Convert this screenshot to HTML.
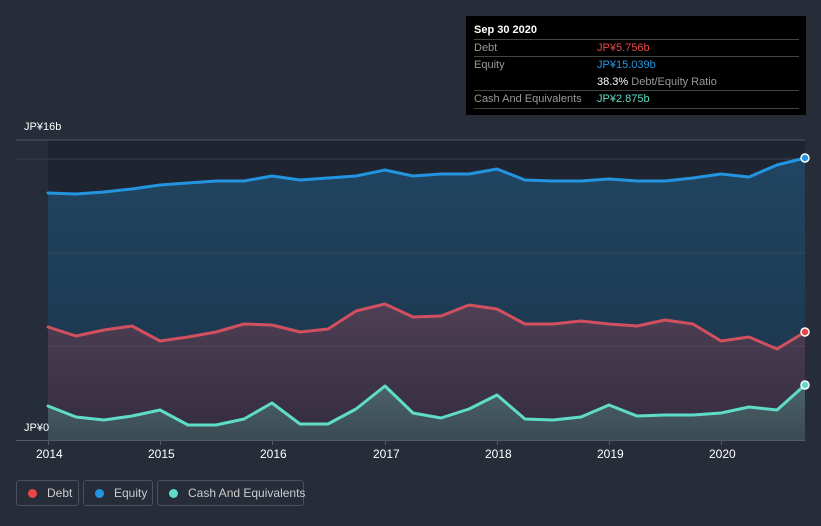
<!DOCTYPE html>
<html><head><meta charset="utf-8"><style>
body{margin:0;width:821px;height:526px;background:#262c38;font-family:"Liberation Sans",sans-serif;overflow:hidden;position:relative}
.t{position:absolute;color:#fff;font-size:12px}
.tip{position:absolute;left:466px;top:16px;width:340px;height:99px;background:#000}
.tip .r{position:absolute;left:8px;width:325px;border-top:1px solid #444;font-size:11px;color:#999;height:17px;line-height:17px;white-space:nowrap}
.leg{position:absolute;top:480px;height:26px;border:1px solid #4a505c;border-radius:3px;color:#ccc;font-size:12px;line-height:24px;box-sizing:border-box;white-space:nowrap}
.leg i{display:inline-block;width:9px;height:9px;border-radius:50%;margin:0 10px 0 11px;vertical-align:-1px}
</style></head><body>
<svg width="821" height="526" style="position:absolute;left:0;top:0">
<defs>
<linearGradient id="eq" x1="0" y1="0" x2="0" y2="1"><stop offset="0" stop-color="#214561"/><stop offset="1" stop-color="#1b3349"/></linearGradient>
<linearGradient id="db" x1="0" y1="0" x2="0" y2="1"><stop offset="0" stop-color="#4e3f55"/><stop offset="1" stop-color="#332d3e"/></linearGradient>
<linearGradient id="cs" x1="0" y1="0" x2="0" y2="1"><stop offset="0" stop-color="#4b6369"/><stop offset="1" stop-color="#3b4a54"/></linearGradient>
</defs>
<rect x="48" y="140" width="757" height="300" fill="#1f2530"/>
<line x1="16" y1="140" x2="805" y2="140" stroke="#4d5360"/>
<line x1="16" y1="159" x2="805" y2="159" stroke="#3a404b"/>
<polygon fill="url(#eq)" points="48,440 48,193 76,194 104,192 132,189 160,185 188,183 216,181 244,181 272,176 300,180 328,178 356,176 385,170 413,176 441,174 469,174 497,169 525,180 553,181 581,181 609,179 637,181 665,181 693,178 721,174 749,177 777,165 805,158 805,440"/>
<line x1="48" y1="253" x2="805" y2="253" stroke="#2f4a60"/>
<polygon fill="url(#db)" points="48,440 48,327 76,336 104,330 132,326 160,341 188,337 216,332 244,324 272,325 300,332 328,329 356,311 385,304 413,317 441,316 469,305 497,309 525,324 553,324 581,321 609,324 637,326 665,320 693,324 721,341 749,337 777,349 805,332 805,440"/>
<line x1="48" y1="346" x2="805" y2="346" stroke="#55465a"/>
<polygon fill="url(#cs)" points="48,440 48,406 76,417 104,420 132,416 160,410 188,425 216,425 244,419 272,403 300,424 328,424 356,409 385,386 413,413 441,418 469,409 497,395 525,419 553,420 581,417 609,405 637,416 665,415 693,415 721,413 749,407 777,410 805,385 805,440"/>
<g fill="none" stroke-width="3" stroke-linejoin="round" stroke-linecap="round">
<polyline stroke="#2394e0" points="48,193 76,194 104,192 132,189 160,185 188,183 216,181 244,181 272,176 300,180 328,178 356,176 385,170 413,176 441,174 469,174 497,169 525,180 553,181 581,181 609,179 637,181 665,181 693,178 721,174 749,177 777,165 805,158"/>
<polyline stroke="#d0505f" points="48,327 76,336 104,330 132,326 160,341 188,337 216,332 244,324 272,325 300,332 328,329 356,311 385,304 413,317 441,316 469,305 497,309 525,324 553,324 581,321 609,324 637,326 665,320 693,324 721,341 749,337 777,349 805,332"/>
<polyline stroke="#5fdcc8" points="48,406 76,417 104,420 132,416 160,410 188,425 216,425 244,419 272,403 300,424 328,424 356,409 385,386 413,413 441,418 469,409 497,395 525,419 553,420 581,417 609,405 637,416 665,415 693,415 721,413 749,407 777,410 805,385"/>
</g>
<circle cx="805" cy="158" r="4" fill="#2394e0" stroke="#fff" stroke-width="1.5"/>
<circle cx="805" cy="332" r="4" fill="#e84545" stroke="#fff" stroke-width="1.5"/>
<circle cx="805" cy="385" r="4" fill="#5fdcc8" stroke="#fff" stroke-width="1.5"/>
<line x1="16" y1="440.5" x2="805" y2="440.5" stroke="#555b66"/>
<g stroke="#555b66"><line x1="48.5" y1="440" x2="48.5" y2="445"/><line x1="160.5" y1="440" x2="160.5" y2="445"/><line x1="272.5" y1="440" x2="272.5" y2="445"/><line x1="385.5" y1="440" x2="385.5" y2="445"/><line x1="497.5" y1="440" x2="497.5" y2="445"/><line x1="609.5" y1="440" x2="609.5" y2="445"/><line x1="721.5" y1="440" x2="721.5" y2="445"/></g>
</svg>
<div class="t" style="left:24px;top:121px;font-size:11px">JP¥16b</div>
<div class="t" style="left:24px;top:422px;font-size:11px">JP¥0</div>
<div class="t" style="left:36px;top:447px">2014</div>
<div class="t" style="left:148px;top:447px">2015</div>
<div class="t" style="left:260px;top:447px">2016</div>
<div class="t" style="left:373px;top:447px">2017</div>
<div class="t" style="left:485px;top:447px">2018</div>
<div class="t" style="left:597px;top:447px">2019</div>
<div class="t" style="left:709px;top:447px">2020</div>
<div class="tip">
<div style="position:absolute;left:8px;top:8px;color:#fff;font-weight:bold;font-size:11px">Sep 30 2020</div>
<div class="r" style="top:23px">Debt<span style="position:absolute;left:123px;color:#e84545">JP¥5.756b</span></div>
<div class="r" style="top:40px;height:34px">Equity<span style="position:absolute;left:123px;color:#2394e0">JP¥15.039b</span><span style="position:absolute;left:123px;top:17px"><b style="color:#fff;font-weight:normal">38.3%</b> Debt/Equity Ratio</span></div>
<div class="r" style="top:74px;border-bottom:1px solid #444">Cash And Equivalents<span style="position:absolute;left:123px;color:#5fdcc8">JP¥2.875b</span></div>
</div>
<div class="leg" style="left:16px;width:63px"><i style="background:#e84545"></i>Debt</div>
<div class="leg" style="left:83px;width:70px"><i style="background:#2394e0"></i>Equity</div>
<div class="leg" style="left:157px;width:147px"><i style="background:#5fdcc8"></i>Cash And Equivalents</div>
</body></html>
